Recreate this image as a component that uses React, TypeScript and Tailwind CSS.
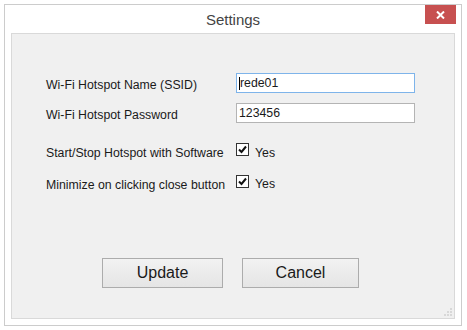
const CheckBox = () => (
  <span className="flex h-[13px] w-[13px] items-center justify-center border border-[#333333] bg-white">
    <svg width="9" height="9" viewBox="0 0 9 9">
      <path d="M1 4.5 L3.5 7 L8 1.5" fill="none" stroke="#111" strokeWidth="2" />
    </svg>
  </span>
);

export default function App() {
  return (
    <div className="h-[330px] w-[467px] bg-white p-[4px] font-['Liberation_Sans',Arial,sans-serif] text-[12.3px] text-[#1a1a1a]">
      <div className="flex h-[322px] w-[458px] flex-col border border-[#cccccc] bg-white">
        {/* title bar */}
        <div className="relative h-[28px] pt-[6px] text-center text-[15px] leading-[17px] text-[#444444]">
          Settings
          <button className="absolute right-[5px] top-0 flex h-[19px] w-[31px] items-center justify-center bg-[#c75050]">
            <svg width="9" height="8" viewBox="0 0 9 8">
              <path d="M1 0.5 L8 7.5 M8 0.5 L1 7.5" stroke="white" strokeWidth="2" />
            </svg>
          </button>
        </div>

        {/* content panel */}
        <div className="relative mx-[6px] flex h-[286px] flex-col border border-[#d9d9d9] bg-[#f0f0f0] pl-[34px] pt-[39px]">
          <div className="grid grid-cols-[190px_179px]">
            <div className="h-[20px] pt-[5px] leading-[14px]">Wi-Fi Hotspot Name (SSID)</div>
            <div className="flex h-[20px] items-center border border-[#7eb4ea] bg-white pl-[2px] leading-[14px]">
              <span className="h-[13px] w-px bg-black" />
              rede01
            </div>

            <div className="mt-[10px] h-[20px] pt-[5px] leading-[14px]">Wi-Fi Hotspot Password</div>
            <div className="mt-[10px] flex h-[20px] items-center border border-[#b4b4b4] bg-white pl-[2px] leading-[14px]">
              123456
            </div>

            <div className="mt-[18px] h-[20px] pt-[5px] leading-[14px]">Start/Stop Hotspot with Software</div>
            <div className="mt-[18px] flex h-[20px] items-start gap-[6px]">
              <span className="mt-[2px]">
                <CheckBox />
              </span>
              <span className="pt-[5px] leading-[14px]">Yes</span>
            </div>

            <div className="mt-[12px] h-[20px] pt-[5px] leading-[14px]">Minimize on clicking close button</div>
            <div className="mt-[12px] flex h-[20px] items-start gap-[6px]">
              <span className="mt-[2px]">
                <CheckBox />
              </span>
              <span className="pt-[4px] leading-[14px]">Yes</span>
            </div>
          </div>

          <div className="ml-[56px] mt-[65px] flex gap-[19px] text-[16px] leading-[18px] text-[#1a1a1a]">
            <button className="h-[30px] w-[121px] border border-[#acacac] bg-gradient-to-b from-[#f2f2f2] to-[#e5e5e5]">
              Update
            </button>
            <button className="h-[30px] w-[117px] border border-[#acacac] bg-gradient-to-b from-[#f2f2f2] to-[#e5e5e5]">
              Cancel
            </button>
          </div>

          {/* resize grip */}
          <svg className="absolute bottom-[1px] right-[1px]" width="10" height="10" viewBox="0 0 10 10">
            <rect x="7" y="1" width="2" height="2" fill="#d8d8d8" />
            <rect x="4" y="4" width="2" height="2" fill="#d8d8d8" />
            <rect x="7" y="4" width="2" height="2" fill="#d8d8d8" />
            <rect x="1" y="7" width="2" height="2" fill="#d8d8d8" />
            <rect x="4" y="7" width="2" height="2" fill="#d8d8d8" />
            <rect x="7" y="7" width="2" height="2" fill="#d8d8d8" />
          </svg>
        </div>
      </div>
    </div>
  );
}
